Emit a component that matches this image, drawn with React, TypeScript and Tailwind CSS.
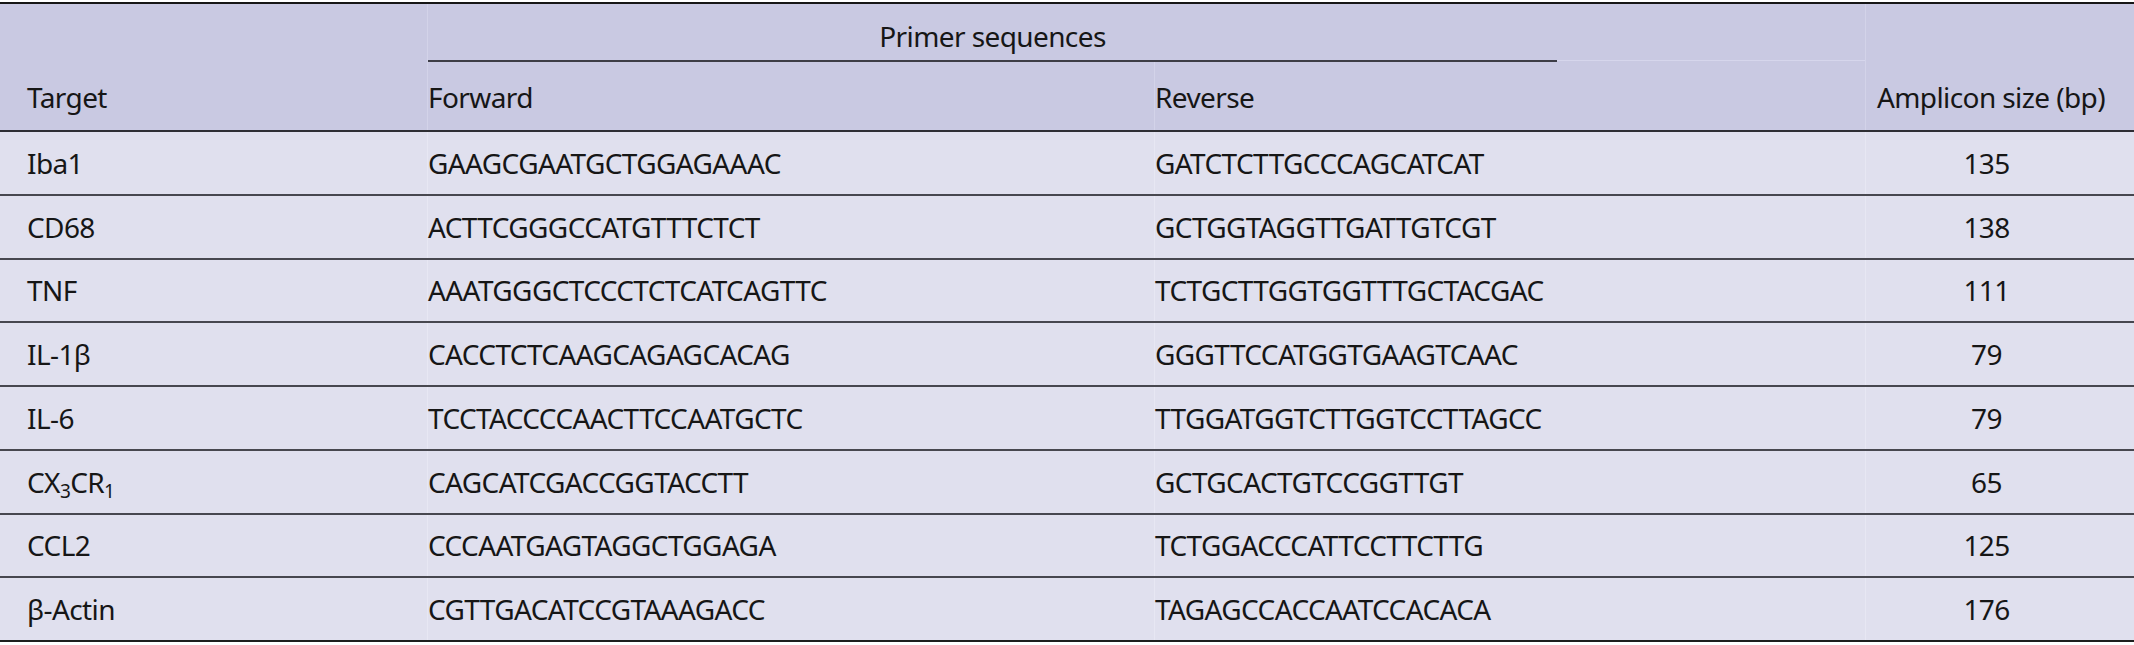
import React from "react";

type Row = { target: React.ReactNode; fwd: string; rev: string; size: string };

const rows: Row[] = [
  { target: "Iba1", fwd: "GAAGCGAATGCTGGAGAAAC", rev: "GATCTCTTGCCCAGCATCAT", size: "135" },
  { target: "CD68", fwd: "ACTTCGGGCCATGTTTCTCT", rev: "GCTGGTAGGTTGATTGTCGT", size: "138" },
  { target: "TNF", fwd: "AAATGGGCTCCCTCTCATCAGTTC", rev: "TCTGCTTGGTGGTTTGCTACGAC", size: "111" },
  { target: "IL-1\u03b2", fwd: "CACCTCTCAAGCAGAGCACAG", rev: "GGGTTCCATGGTGAAGTCAAC", size: "79" },
  { target: "IL-6", fwd: "TCCTACCCCAACTTCCAATGCTC", rev: "TTGGATGGTCTTGGTCCTTAGCC", size: "79" },
  {
    target: (
      <span>
        CX<sub className="text-[19px] bottom-[-0.3em]">3</sub>CR<sub className="text-[19px] bottom-[-0.3em]">1</sub>
      </span>
    ),
    fwd: "CAGCATCGACCGGTACCTT",
    rev: "GCTGCACTGTCCGGTTGT",
    size: "65",
  },
  { target: "CCL2", fwd: "CCCAATGAGTAGGCTGGAGA", rev: "TCTGGACCCATTCCTTCTTG", size: "125" },
  { target: "\u03b2-Actin", fwd: "CGTTGACATCCGTAAAGACC", rev: "TAGAGCCACCAATCCACACA", size: "176" },
];

export default function App() {
  return (
    <div
      className="w-[2134px] h-[645px] bg-white pt-[2px] text-[#161616] text-[28px] tracking-[-0.6px]"
      style={{ fontFamily: '"Noto Sans", "Open Sans", sans-serif' }}
    >
      <div className="border-t-2 border-b-2 border-t-[#161616] border-b-[#1e1e1e]">
        {/* Header */}
        <div className="bg-[#c9c9e2]">
          {/* Spanner row */}
          <div className="grid grid-cols-[427px_1438px_269px] h-[58px]">
            <div />
            <div className="border-l border-l-[#d3d3e9] flex flex-col">
              <div className="flex-1 flex items-center pt-[8px] pl-[450px]">
                <span className="w-[229px] text-center">Primer sequences</span>
              </div>
              <div className="flex h-[2px]">
                <div className="w-[1129px] bg-[#3d3d46]" />
                <div className="flex-1 h-[1px] bg-[#d6d6ec]" />
              </div>
            </div>
            <div className="border-l border-l-[#d3d3e9]" />
          </div>
          {/* Column headers */}
          <div className="grid grid-cols-[427px_727px_711px_269px] h-[70px] border-b-2 border-b-[#2e2e34]">
            <div className="flex items-center pl-[27px] pt-[2px]">Target</div>
            <div className="flex items-center border-l border-l-[#d3d3e9] pt-[2px]">Forward</div>
            <div className="flex items-center border-l border-l-[#d3d3e9] pt-[2px]">Reverse</div>
            <div className="flex items-center justify-end pr-[29px] border-l border-l-[#d3d3e9] pt-[2px] whitespace-nowrap">
              Amplicon size (bp)
            </div>
          </div>
        </div>
        {/* Body */}
        <div className="bg-[#e0e0ee]">
          {rows.map((r, i) => (
            <div
              key={i}
              className={
                i < rows.length - 1
                  ? "grid grid-cols-[427px_727px_711px_269px] h-[63.75px] border-b-2 border-b-[#47474f]"
                  : "grid grid-cols-[427px_727px_711px_269px] h-[61.75px]"
              }
            >
              <div className="flex items-center pl-[27px]">{r.target}</div>
              <div className="flex items-center border-l border-l-[#e7e7f3]">{r.fwd}</div>
              <div className="flex items-center border-l border-l-[#e7e7f3]">{r.rev}</div>
              <div className="flex items-center justify-center pr-[27px] border-l border-l-[#e7e7f3]">{r.size}</div>
            </div>
          ))}
        </div>
      </div>
    </div>
  );
}
